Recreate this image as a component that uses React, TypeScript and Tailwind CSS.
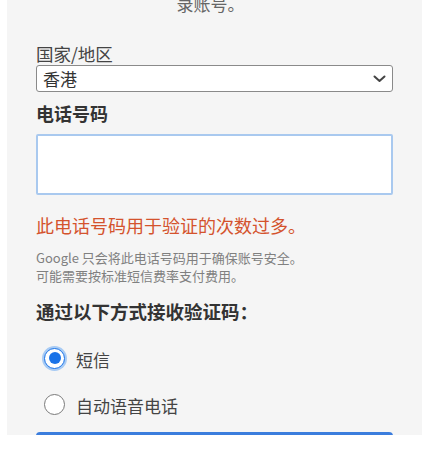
const font = { fontFamily: "'Noto Sans CJK SC', 'Noto Sans', sans-serif" };

const Radio = ({ checked, label }: { checked?: boolean; label: string }) => (
  <div className="flex items-center h-[24px]">
    <div className="w-[23px] ml-[7px] flex items-center justify-center">
      {checked ? (
        <div className="w-[21px] h-[21px] rounded-full border-[1.5px] border-[#1a73e8] ring-2 ring-[#a8cbf4] bg-white flex items-center justify-center">
          <div className="w-[12px] h-[12px] rounded-full bg-[#1a73e8]" />
        </div>
      ) : (
        <div className="w-[21px] h-[21px] rounded-full border-[1.5px] border-[#7a7a7a] bg-white" />
      )}
    </div>
    <span className="ml-[10px] mt-[3px] text-[17px] leading-[20px] text-[#444]">{label}</span>
  </div>
);

export default function App() {
  return (
    <div className="w-[429px] h-[450px] bg-white overflow-hidden" style={font}>
      <div className="ml-[7px] w-[415px] h-[435px] bg-[#f5f5f5] overflow-hidden px-[29px]">
        {/* tail of the intro sentence */}
        <p className="mt-[-6px] text-center pr-[8px] text-[17px] leading-[20px] text-[#666]">录账号。</p>

        <label className="block mt-[30px] text-[17.5px] leading-[20px] text-[#444]">国家/地区</label>
        <div className="mt-[1px] h-[27px] bg-white border border-[#8a8a8a] rounded-[3px] flex items-center justify-between pl-[6px] pr-[6px]">
          <span className="text-[17px] leading-[20px] text-[#333]">香港</span>
          <svg width="13" height="8" viewBox="0 0 13 8" fill="none">
            <path d="M1.5 1.5 L6.5 6 L11.5 1.5" stroke="#444" strokeWidth="2" strokeLinecap="round" strokeLinejoin="round" />
          </svg>
        </div>

        <label className="block mt-[11px] text-[18px] leading-[20px] font-bold text-[#333]">电话号码</label>
        <div className="mt-[11px] h-[61px] bg-white border-2 border-[#a9c9ef] rounded-[2px]" />

        <p className="mt-[20px] text-[18px] leading-[20px] text-[#d4532d]">此电话号码用于验证的次数过多。</p>

        <div className="mt-[14px] text-[13px] leading-[18px] text-[#808080]">
          <p>Google 只会将此电话号码用于确保账号安全。</p>
          <p>可能需要按标准短信费率支付费用。</p>
        </div>

        <p className="mt-[16px] text-[18.5px] leading-[20px] font-bold text-[#333]">通过以下方式接收验证码：</p>

        <div className="mt-[25px]">
          <Radio checked label="短信" />
        </div>
        <div className="mt-[22px]">
          <Radio label="自动语音电话" />
        </div>

        <div className="mt-[16px] h-[40px] rounded-[4px] bg-[#3b7ddd]" />
      </div>
    </div>
  );
}
